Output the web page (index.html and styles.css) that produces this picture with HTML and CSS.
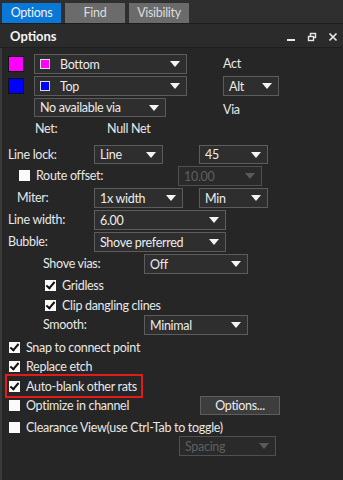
FILE: index.html
```html
<!DOCTYPE html>
<html lang="en">

<head>
    <meta charset="UTF-8">
    <title>Options</title>
    <link rel="stylesheet" href="styles.css">
</head>

<body>
    <div class="tabs">
        <div class="tab active">Options</div>
        <div class="tab">Find</div>
        <div class="tab">Visibility</div>
    </div>

    <div class="header">
        <span class="title">Options</span>
        <div class="win-btns">
            <svg width="10" height="10" viewBox="0 0 10 10"><rect x="1" y="7" width="8" height="2" fill="#e8e8e8"/></svg>
            <svg width="10" height="10" viewBox="0 0 10 10"><rect x="3.5" y="1.5" width="5" height="4" fill="none" stroke="#e8e8e8" stroke-width="1.4"/><rect x="1.5" y="4.5" width="5" height="4" fill="#2b2b2b" stroke="#e8e8e8" stroke-width="1.4"/></svg>
            <svg width="10" height="10" viewBox="0 0 10 10"><path d="M1.5 1.5 L8.5 8.5 M8.5 1.5 L1.5 8.5" stroke="#e8e8e8" stroke-width="1.7"/></svg>
        </div>
    </div>

    <div class="panel">
        <div class="row h22">
            <span class="swatch magenta"></span>
            <div class="drop w-layer"><span class="mini magenta"></span>Bottom<i class="arrow"></i></div>
            <span class="side">Act</span>
        </div>
        <div class="row h22">
            <span class="swatch blue"></span>
            <div class="drop w-layer"><span class="mini blue"></span>Top<i class="arrow"></i></div>
            <div class="drop w-alt">Alt<i class="arrow"></i></div>
        </div>
        <div class="row h21">
            <div class="drop w-via">No available via<i class="arrow"></i></div>
            <span class="side via">Via</span>
        </div>
        <div class="row h18 net">
            <span class="lbl">Net:</span>
            <span>Null Net</span>
        </div>
        <div class="row h21 gap-top">
            <span class="lbl l0">Line lock:</span>
            <div class="drop w-sm">Line<i class="arrow"></i></div>
            <div class="drop w-sm second">45<i class="arrow"></i></div>
        </div>
        <div class="row h22">
            <label class="check c1"><span class="box"></span>Route offset:</label>
            <div class="drop w-off disabled">10.00<i class="arrow"></i></div>
        </div>
        <div class="row h22">
            <span class="lbl l1">Miter:</span>
            <div class="drop w-md">1x width<i class="arrow"></i></div>
            <div class="drop w-sm second">Min<i class="arrow"></i></div>
        </div>
        <div class="row h22">
            <span class="lbl l0">Line width:</span>
            <div class="drop w-lg">6.00<i class="arrow"></i></div>
        </div>
        <div class="row h22">
            <span class="lbl l0">Bubble:</span>
            <div class="drop w-lg">Shove preferred<i class="arrow"></i></div>
        </div>
        <div class="row h22">
            <span class="lbl l2">Shove vias:</span>
            <div class="drop w-sub">Off<i class="arrow"></i></div>
        </div>
        <div class="row h19">
            <label class="check c2"><span class="box on"></span>Gridless</label>
        </div>
        <div class="row h20">
            <label class="check c2"><span class="box on"></span>Clip dangling clines</label>
        </div>
        <div class="row h22">
            <span class="lbl l2">Smooth:</span>
            <div class="drop w-sub">Minimal<i class="arrow"></i></div>
        </div>
        <div class="row h20">
            <label class="check"><span class="box on"></span>Snap to connect point</label>
        </div>
        <div class="row h19">
            <label class="check"><span class="box on"></span>Replace etch</label>
        </div>
        <div class="row h20">
            <label class="check marked"><span class="box on"></span>Auto-blank other rats</label>
        </div>
        <div class="row h22">
            <label class="check"><span class="box"></span>Optimize in channel</label>
            <button class="btn">Options...</button>
        </div>
        <div class="row h18">
            <label class="check"><span class="box"></span>Clearance View(use Ctrl-Tab to toggle)</label>
        </div>
        <div class="row h22">
            <div class="drop w-spacing disabled">Spacing<i class="arrow"></i></div>
        </div>
    </div>
</body>

</html>
```

FILE: styles.css
```css
body {
    margin: 0;
    width: 343px;
    height: 480px;
    overflow: hidden;
    background: #262626;
    color: #e8e8e8;
    font-family: Lato, "Noto Sans", sans-serif;
    font-size: 12.5px;
    letter-spacing: -0.3px;
    user-select: none;
}

.tabs {
    display: flex;
    gap: 4px;
    height: 24px;
    padding: 3px 0 0 2px;
    box-sizing: border-box;
    background: #2f2f2f;
    border-bottom: 1px solid #1c1c1c;
}

.tab {
    width: 60px;
    height: 20px;
    background: #6b6b6b;
    color: #dcdcdc;
    text-align: center;
    line-height: 20px;
}

.tab.active {
    width: 59px;
    background: #0a78d7;
    color: #f2f2f2;
}

.header {
    display: flex;
    align-items: center;
    justify-content: space-between;
    height: 23px;
    padding: 0 5px 0 10px;
    background: #2b2b2b;
    border-bottom: 1px solid #1e1e1e;
}

.title {
    font-weight: bold;
    font-size: 13px;
    letter-spacing: 0;
    color: #f4f4f4;
}

.win-btns {
    display: flex;
    gap: 11px;
    padding-top: 2px;
}

.panel {
    border-left: 2px solid #3a3a3a;
    height: 440px;
    padding-top: 6px;
}

.row {
    display: flex;
    align-items: center;
    position: relative;
}

.h18 { height: 18px; }
.h19 { height: 19px; }
.h20 { height: 20px; }
.h21 { height: 21px; align-items: flex-start; }
.h22 { height: 22px; align-items: flex-start; }
.h21 .lbl, .h22 .lbl, .h22 .check, .h22 .side { margin-top: 2px; }
.gap-top { margin-top: 8px; }

.swatch {
    width: 14px;
    height: 14px;
    margin: 2px 10px 0 6px;
    border: 1px solid #111;
}

.magenta { background: #ff00ff; }
.blue { background: #0000ff; }

.mini {
    width: 8px;
    height: 8px;
    margin-right: 10px;
    border: 1px solid #dcdcdc;
}

.drop {
    position: relative;
    display: flex;
    align-items: center;
    height: 20px;
    box-sizing: border-box;
    padding-left: 5px;
    background: #2e2e2e;
    border: 1px solid #5c5c5c;
    color: #ececec;
}

.h21 .drop { height: 19px; }

.drop .arrow {
    position: absolute;
    right: 6px;
    top: 6px;
    width: 0;
    height: 0;
    border-left: 5px solid transparent;
    border-right: 5px solid transparent;
    border-top: 6px solid #f4f4f4;
}

.drop.disabled {
    color: #5f5f5f;
    border-color: #505050;
    background: #2a2a2a;
}

.drop.disabled .arrow {
    border-top-color: #5a5a5a;
}

.w-layer { width: 153px; }
.w-alt { width: 56px; margin-left: 36px; }
.w-via { width: 132px; margin-left: 32px; }
.w-sm { width: 69px; }
.w-md { width: 89px; }
.w-lg { width: 132px; }
.w-sub { width: 104px; }
.w-off { width: 84px; position: absolute; left: 176px; }
.w-spacing { width: 97px; margin-left: 177px; }

.second { position: absolute; left: 197px; }

.side { margin-left: 36px; margin-top: 3px; }
.side.via { margin-left: 57px; margin-top: 4px; }

.net .lbl { width: 72px; padding-left: 33px; }

.lbl { display: inline-block; }
.l0 { width: 86px; padding-left: 6px; }
.l1 { width: 77px; padding-left: 15px; }
.l2 { width: 101px; padding-left: 41px; }

.check {
    display: flex;
    align-items: center;
    padding-left: 7px;
}

.check.c1 { padding-left: 17px; }
.check.c2 { padding-left: 43px; }

.box {
    width: 11px;
    height: 11px;
    margin-right: 6px;
    background: #fafafa;
    position: relative;
}

.box.on::after {
    content: "";
    position: absolute;
    left: 3px;
    top: 0;
    width: 3px;
    height: 7px;
    border-right: 2px solid #111;
    border-bottom: 2px solid #111;
    transform: rotate(40deg);
}

.check.marked {
    height: 24px;
    box-sizing: border-box;
    border: 2px solid #e01b1b;
    padding: 0 4px 0 2px;
    margin-left: 3px;
}

.btn {
    position: absolute;
    left: 198px;
    top: 0;
    width: 80px;
    height: 19px;
    padding: 0;
    background: #3d3d3d;
    border: 1px solid #5e5e5e;
    color: #ececec;
    font-family: inherit;
    font-size: 12.5px;
    letter-spacing: -0.3px;
}
```
